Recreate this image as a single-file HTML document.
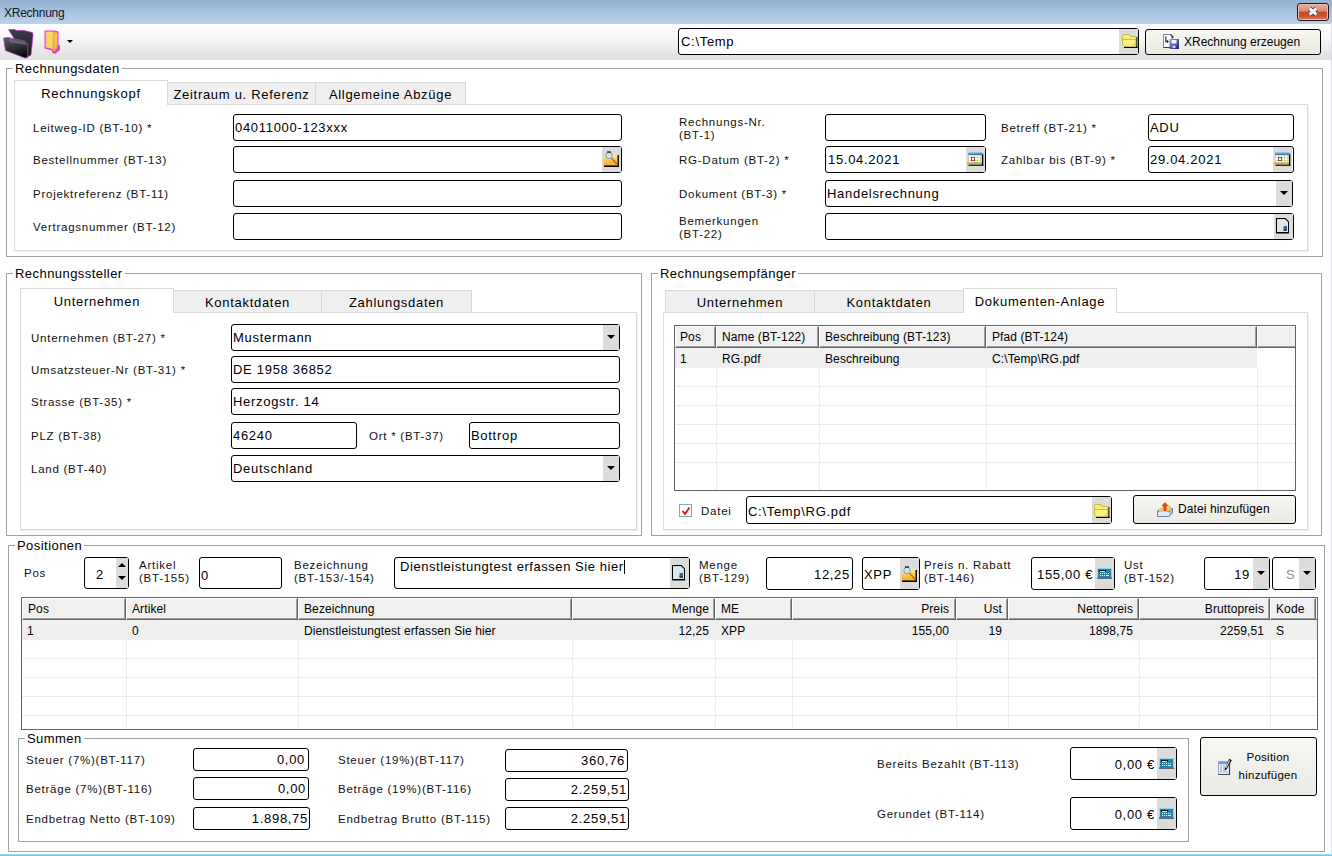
<!DOCTYPE html>
<html><head><meta charset="utf-8">
<style>
*{box-sizing:border-box}
html,body{margin:0;padding:0}
body{width:1332px;height:856px;position:relative;overflow:hidden;background:#fff;font-family:"Liberation Sans",sans-serif;color:#000;font-size:12px}
.a{position:absolute}
.tb{position:absolute;border:1px solid #000;border-radius:3px;background:#fff;height:27px}
.btn{position:absolute;background:#dcdcdc}
.grp{position:absolute;border:1px solid #a2a2a2}
.gt{position:absolute;background:#fff;font-size:13px;letter-spacing:0.45px;padding:0 2px;line-height:14px;white-space:nowrap}
.page{position:absolute;border:1px solid #dadada;box-shadow:1px 1px 0 #f0f0f0}
.tab{position:absolute;background:#efefef;border:1px solid #d9d9d9;border-bottom:none;font-size:13px;letter-spacing:0.7px;text-align:center;white-space:nowrap}
.tab.sel{background:#fff;z-index:2}
.l{position:absolute;font-size:11.5px;letter-spacing:0.75px;white-space:nowrap;line-height:13px;color:#111}
.t{position:absolute;font-size:13px;letter-spacing:0.7px;white-space:nowrap;line-height:15px}
.g{position:absolute;font-size:12px;line-height:14px;white-space:nowrap;letter-spacing:0.1px}
.arr{position:absolute;width:0;height:0;border-left:4px solid transparent;border-right:4px solid transparent;border-top:4px solid #000}
</style></head><body>
<!-- title bar -->
<div class="a" style="left:0;top:0;width:1332px;height:24px;background:linear-gradient(#94b1d3,#bad3ec)"></div>
<div class="a" style="left:4px;top:6px;font-size:12px;line-height:14px;color:#101828;letter-spacing:-0.25px">XRechnung</div>
<!-- toolbar -->
<div class="a" style="left:0;top:24px;width:1332px;height:36px;background:linear-gradient(#ffffff,#f6f6f6 40%,#dedede)"></div>

<!-- toolbar icons -->
<svg class="a" style="left:0px;top:26px" width="40" height="36" viewBox="0 0 40 36">
 <defs><linearGradient id="dkf" x1="0" y1="0" x2="0.3" y2="1"><stop offset="0" stop-color="#5c6268"/><stop offset="0.5" stop-color="#34383c"/><stop offset="1" stop-color="#0e0e10"/></linearGradient>
 <linearGradient id="dkb" x1="0" y1="0" x2="0" y2="1"><stop offset="0" stop-color="#3a3e44"/><stop offset="1" stop-color="#18191b"/></linearGradient></defs>
 <path d="M8.5 3.5 L15 3.5 L16 4.5 L24 4.5 L32.5 6.5 L33 9 L31 29 L26 31.5 Z" fill="url(#dkb)" stroke="#c030c8" stroke-width="1" stroke-opacity="0.7"/>
 <path d="M3.5 12 L8 11.5 L25 15 L28 18 L27.5 31.5 L25 32 L5.5 24.5 Z" fill="url(#dkf)" stroke="#c030c8" stroke-width="1" stroke-opacity="0.7"/>
 <path d="M9 12.5 L25 16 L27 19 L9 16 Z" fill="#6a7076" opacity="0.8"/>
</svg>
<svg class="a" style="left:40px;top:26px" width="24" height="30" viewBox="0 0 24 30">
 <path d="M4.5 4.5 L14.5 4.5 L18.5 5.5 L18.5 18 L20 20 L20 24 L15 28 L12 26.5 L12 24.5 L4.5 22.5 Z" fill="#e040c8"/>
 <path d="M5.5 5.5 L14 5.5 L14 23 L5.5 21.5 Z" fill="#f8a8b8"/>
 <path d="M6.5 6 L13.5 6 L14 23 L6.5 21 Z" fill="#fcd460"/>
 <path d="M13 6 L17.5 6.5 L17.5 21.5 L14.5 25.5 L12.5 24 Z" fill="#e2b040"/>
 <path d="M14 6.5 L17 7 L17 19 L14.5 22 Z" fill="#f0c858"/>
</svg>
<div class="arr" style="left:67px;top:40px;border-left-width:3px;border-right-width:3px;border-top-width:3px"></div>
<!-- path box -->
<div class="tb" style="left:678px;top:28px;width:461px;height:27px"></div>
<div class="t" style="left:681px;top:34px">C:\Temp</div>
<div class="btn" style="left:1119px;top:29px;width:19px;height:25px"></div>
<svg class="fold a" style="left:1121px;top:34px" width="17" height="14" viewBox="0 0 17 14">
 <rect x="15" y="3" width="1.4" height="11" fill="#000"/>
 <rect x="3" y="12.6" width="13.4" height="1.4" fill="#000"/>
 <path d="M1.5 2.5 Q1.5 0.5 3.5 0.5 L8 0.5 L9.5 2.5 L15 2.5 L15 12.5 L3 12.5 L1.5 10 Z" fill="#f6f07a" stroke="#c4bc3c" stroke-width="1"/>
 <path d="M1 5.5 L15 5.5" stroke="#c8c040" stroke-width="1"/>
 <path d="M6 12 L13 6.5 M9 12 L14 8 M4 10 L9 6.5" stroke="#f8f8c8" stroke-width="0.8"/>
 <path d="M11 11 L15 8 L15 12.5 L10 12.5 Z" fill="#f0c060" opacity="0.7"/>
</svg>
<!-- XRechnung erzeugen button -->
<div class="a" style="left:1145px;top:29px;width:176px;height:26px;border:1px solid #000;border-radius:3px;background:linear-gradient(#f7f7f3,#ebeae4)"></div>
<svg class="a" style="left:1162px;top:33px" width="18" height="17" viewBox="0 0 18 17">
 <defs><linearGradient id="flp" x1="0" y1="0" x2="1" y2="1"><stop offset="0" stop-color="#9a9cf0"/><stop offset="0.5" stop-color="#5658b0"/><stop offset="1" stop-color="#262870"/></linearGradient></defs>
 <path d="M1.5 1.5 L8.5 1.5 L10 3 L10 14.5 L1.5 14.5 Z" fill="#fff" stroke="#7c88a8" stroke-width="1"/>
 <path d="M1.5 14.5 L8 14.5" stroke="#303848" stroke-width="1"/>
 <path d="M3.8 3.5 L3.8 8.5 L6 8.5" stroke="#303848" stroke-width="1.3" fill="none"/>
 <path d="M5 7.2 L6.5 8.5 L5 9.8" stroke="#303848" stroke-width="1" fill="none"/>
 <path d="M8.5 1.5 L11 4 L10 5" stroke="#2a3040" stroke-width="1.2" fill="none"/>
 <rect x="7.5" y="6" width="9.5" height="10" fill="url(#flp)"/>
 <rect x="9.5" y="7" width="5" height="3.5" fill="#f4f4ff"/>
 <rect x="10.5" y="12.5" width="3" height="2.5" fill="#c8c8e8"/>
</svg>
<div class="t" style="left:1184px;top:34px;font-size:12px;letter-spacing:0px;line-height:16px">XRechnung erzeugen</div>
<!-- close button -->
<div class="a" style="left:1297px;top:3px;width:32px;height:18px;border:1px solid #2c1818;border-radius:3px;box-shadow:inset 0 0 0 1px #f0b8a8;background:linear-gradient(#eab0a0,#dc8a78 45%,#c04a2c 50%,#c85838 80%,#e08870)"></div>
<svg class="a" style="left:1306px;top:5px" width="14" height="13" viewBox="0 0 14 13">
 <path d="M3.5 3.5 L10.5 9.5 M10.5 3.5 L3.5 9.5" stroke="#4a2a2a" stroke-width="4.6" stroke-linecap="butt"/>
 <path d="M3.5 3.5 L10.5 9.5 M10.5 3.5 L3.5 9.5" stroke="#f6f6f6" stroke-width="3" stroke-linecap="butt"/>
</svg>
<div class="a" style="left:1331px;top:24px;width:1px;height:832px;background:#d4e0ec"></div>

<!-- ===== Rechnungsdaten ===== -->
<div class="grp" style="left:6px;top:68px;width:1317px;height:189px"></div>
<div class="gt" style="left:13px;top:62px">Rechnungsdaten</div>
<div class="page" style="left:14px;top:104px;width:1294px;height:147px"></div>
<div class="tab sel" style="left:14px;top:80px;width:154px;height:25px;padding-top:5px">Rechnungskopf</div>
<div class="tab" style="left:167px;top:82px;width:149px;height:22px;padding-top:4px">Zeitraum u. Referenz</div>
<div class="tab" style="left:315px;top:82px;width:151px;height:22px;padding-top:4px">Allgemeine Abzüge</div>

<div class="l" style="left:33px;top:122px">Leitweg-ID (BT-10) *</div>
<div class="l" style="left:33px;top:154px">Bestellnummer (BT-13)</div>
<div class="l" style="left:33px;top:188px">Projektreferenz (BT-11)</div>
<div class="l" style="left:33px;top:221px">Vertragsnummer (BT-12)</div>
<div class="tb" style="left:233px;top:114px;width:389px"></div>
<div class="t" style="left:235px;top:120px">04011000-123xxx</div>
<div class="tb" style="left:233px;top:146px;width:389px"></div>
<div class="btn" style="left:602px;top:147px;width:19px;height:25px"></div>
<svg class="a" style="left:602px;top:150px" width="18" height="18" viewBox="0 0 18 18">
 <defs><linearGradient id="fmg602" x1="0" y1="0" x2="0" y2="1"><stop offset="0" stop-color="#fcec90"/><stop offset="1" stop-color="#f0a818"/></linearGradient></defs>
 <path d="M1.5 8 L5 4.5 L15.5 4.5 L15.5 16 L1.5 16 Z" fill="url(#fmg602)"/>
 <path d="M2 16.2 L16.2 16.2 L16.2 5" stroke="#000" stroke-width="1.4" fill="none"/>
 <path d="M10 8.5 L15 14.5" stroke="#c83010" stroke-width="1.8" stroke-dasharray="1.2 0.8"/>
 <circle cx="7" cy="5.5" r="3.2" fill="#c4eaf6" stroke="#6a7a80" stroke-width="0.7"/>
 <path d="M5 2 L9 2" stroke="#111" stroke-width="1.2"/>
</svg>
<div class="tb" style="left:233px;top:180px;width:389px"></div>
<div class="tb" style="left:233px;top:213px;width:389px"></div>

<div class="l" style="left:679px;top:116px;line-height:13px">Rechnungs-Nr.<br>(BT-1)</div>
<div class="l" style="left:679px;top:154px">RG-Datum (BT-2) *</div>
<div class="l" style="left:679px;top:188px">Dokument (BT-3) *</div>
<div class="l" style="left:679px;top:215px;line-height:13px">Bemerkungen<br>(BT-22)</div>
<div class="tb" style="left:825px;top:114px;width:161px"></div>
<div class="tb" style="left:825px;top:146px;width:161px"></div>
<div class="t" style="left:828px;top:152px">15.04.2021</div>
<div class="btn" style="left:966px;top:147px;width:19px;height:25px"></div>
<svg class="cal a" style="left:967px;top:151px" width="17" height="16" viewBox="0 0 17 16">
 <defs><linearGradient id="cb967" x1="0" y1="0" x2="0" y2="1"><stop offset="0" stop-color="#a8d8f0"/><stop offset="1" stop-color="#2a64a0"/></linearGradient></defs>
 <rect x="15" y="3" width="1.3" height="11.5" fill="#000"/>
 <rect x="1.5" y="13.5" width="14.8" height="1.3" fill="#000"/>
 <rect x="1" y="4" width="14" height="8" fill="#d8d898"/>
 <g fill="#fff"><rect x="2" y="4.5" width="2" height="1.6"/><rect x="5" y="4.5" width="2" height="1.6"/><rect x="8" y="4.5" width="2" height="1.6"/><rect x="11" y="4.5" width="2" height="1.6"/><rect x="2" y="7" width="2" height="2"/><rect x="8" y="7" width="2" height="2"/><rect x="11" y="7" width="2" height="2"/><rect x="2" y="10" width="2" height="1.4"/><rect x="5" y="10" width="2" height="1.4"/><rect x="8" y="10" width="2" height="1.4"/><rect x="11" y="10" width="2" height="1.4"/></g>
 <rect x="4.5" y="6.5" width="3" height="3" fill="#fff" stroke="#a03c78" stroke-width="1"/>
 <rect x="1" y="1" width="15" height="3" rx="1" fill="url(#cb967)"/>
 <rect x="0" y="11.5" width="15" height="2" fill="#b4b440"/>
</svg>
<div class="tb" style="left:825px;top:180px;width:468px"></div>
<div class="t" style="left:827px;top:186px">Handelsrechnung</div>
<div class="btn" style="left:1276px;top:181px;width:16px;height:25px"></div>
<div class="arr" style="left:1280px;top:191px"></div>
<div class="tb" style="left:825px;top:213px;width:469px"></div>
<div class="btn" style="left:1274px;top:214px;width:19px;height:25px"></div>
<svg class="a" style="left:1275px;top:217px" width="15" height="17" viewBox="0 0 15 17">
 <path d="M1 1 L10.5 1 L14 4.5 L14 16.5 L1 16.5 Z" fill="#000"/>
 <path d="M2 2 L10 2 L13 5 L13 14.5 Q13 15 12.5 15 L2.5 15 Q2 15 2 14.5 Z" fill="#dfe4e8"/>
 <rect x="2" y="2" width="8" height="1" fill="#b8e8e0"/>
 <rect x="8.5" y="9" width="3.5" height="4.5" fill="#2a6c98"/>
 <rect x="8.5" y="12.5" width="3.5" height="1.2" fill="#0a2a30"/>
</svg>

<div class="l" style="left:1001px;top:122px">Betreff (BT-21) *</div>
<div class="l" style="left:1001px;top:154px">Zahlbar bis (BT-9) *</div>
<div class="tb" style="left:1148px;top:114px;width:146px"></div>
<div class="t" style="left:1150px;top:120px">ADU</div>
<div class="tb" style="left:1148px;top:146px;width:146px"></div>
<div class="t" style="left:1150px;top:152px">29.04.2021</div>
<div class="btn" style="left:1273px;top:147px;width:19px;height:25px"></div>
<svg class="cal a" style="left:1274px;top:151px" width="17" height="16" viewBox="0 0 17 16">
 <defs><linearGradient id="cb1274" x1="0" y1="0" x2="0" y2="1"><stop offset="0" stop-color="#a8d8f0"/><stop offset="1" stop-color="#2a64a0"/></linearGradient></defs>
 <rect x="15" y="3" width="1.3" height="11.5" fill="#000"/>
 <rect x="1.5" y="13.5" width="14.8" height="1.3" fill="#000"/>
 <rect x="1" y="4" width="14" height="8" fill="#d8d898"/>
 <g fill="#fff"><rect x="2" y="4.5" width="2" height="1.6"/><rect x="5" y="4.5" width="2" height="1.6"/><rect x="8" y="4.5" width="2" height="1.6"/><rect x="11" y="4.5" width="2" height="1.6"/><rect x="2" y="7" width="2" height="2"/><rect x="8" y="7" width="2" height="2"/><rect x="11" y="7" width="2" height="2"/><rect x="2" y="10" width="2" height="1.4"/><rect x="5" y="10" width="2" height="1.4"/><rect x="8" y="10" width="2" height="1.4"/><rect x="11" y="10" width="2" height="1.4"/></g>
 <rect x="4.5" y="6.5" width="3" height="3" fill="#fff" stroke="#a03c78" stroke-width="1"/>
 <rect x="1" y="1" width="15" height="3" rx="1" fill="url(#cb1274)"/>
 <rect x="0" y="11.5" width="15" height="2" fill="#b4b440"/>
</svg>


<!-- ===== Rechnungssteller ===== -->
<div class="grp" style="left:6px;top:273px;width:636px;height:263px"></div>
<div class="gt" style="left:13px;top:267px">Rechnungssteller</div>
<div class="page" style="left:20px;top:312px;width:617px;height:218px"></div>
<div class="tab sel" style="left:20px;top:288px;width:154px;height:25px;padding-top:5px">Unternehmen</div>
<div class="tab" style="left:173px;top:290px;width:149px;height:22px;padding-top:4px">Kontaktdaten</div>
<div class="tab" style="left:321px;top:290px;width:151px;height:22px;padding-top:4px">Zahlungsdaten</div>

<div class="l" style="left:31px;top:332px">Unternehmen (BT-27) *</div>
<div class="l" style="left:31px;top:364px">Umsatzsteuer-Nr (BT-31) *</div>
<div class="l" style="left:31px;top:396px">Strasse (BT-35) *</div>
<div class="l" style="left:31px;top:430px">PLZ (BT-38)</div>
<div class="l" style="left:31px;top:463px">Land (BT-40)</div>
<div class="tb" style="left:231px;top:324px;width:389px"></div>
<div class="t" style="left:233px;top:330px">Mustermann</div>
<div class="btn" style="left:603px;top:325px;width:16px;height:25px"></div>
<div class="arr" style="left:607px;top:335px"></div>
<div class="tb" style="left:231px;top:356px;width:389px"></div>
<div class="t" style="left:233px;top:362px">DE 1958 36852</div>
<div class="tb" style="left:231px;top:388px;width:389px"></div>
<div class="t" style="left:233px;top:394px">Herzogstr. 14</div>
<div class="tb" style="left:231px;top:422px;width:126px"></div>
<div class="t" style="left:233px;top:428px">46240</div>
<div class="l" style="left:369px;top:430px">Ort * (BT-37)</div>
<div class="tb" style="left:469px;top:422px;width:151px"></div>
<div class="t" style="left:471px;top:428px">Bottrop</div>
<div class="tb" style="left:231px;top:455px;width:389px"></div>
<div class="t" style="left:233px;top:461px">Deutschland</div>
<div class="btn" style="left:603px;top:456px;width:16px;height:25px"></div>
<div class="arr" style="left:607px;top:466px"></div>

<!-- ===== Rechnungsempfaenger ===== -->
<div class="grp" style="left:651px;top:273px;width:671px;height:263px"></div>
<div class="gt" style="left:658px;top:267px">Rechnungsempfänger</div>
<div class="page" style="left:663px;top:312px;width:645px;height:218px"></div>
<div class="tab" style="left:665px;top:290px;width:150px;height:22px;padding-top:4px">Unternehmen</div>
<div class="tab" style="left:814px;top:290px;width:150px;height:22px;padding-top:4px">Kontaktdaten</div>
<div class="tab sel" style="left:963px;top:288px;width:154px;height:25px;padding-top:5px">Dokumenten-Anlage</div>
<div class="a" style="left:674px;top:325px;width:622px;height:166px;border:1px solid #646464;background:#fff"></div>
<div class="a" style="left:675px;top:348px;width:582px;height:20px;background:#efefef"></div>
<div class="a" style="left:675px;top:386px;width:620px;height:1px;background:#ebebeb"></div>
<div class="a" style="left:675px;top:405px;width:620px;height:1px;background:#ebebeb"></div>
<div class="a" style="left:675px;top:424px;width:620px;height:1px;background:#ebebeb"></div>
<div class="a" style="left:675px;top:443px;width:620px;height:1px;background:#ebebeb"></div>
<div class="a" style="left:675px;top:462px;width:620px;height:1px;background:#ebebeb"></div>
<div class="a" style="left:716px;top:368px;width:1px;height:122px;background:#ebebeb"></div>
<div class="a" style="left:819px;top:368px;width:1px;height:122px;background:#ebebeb"></div>
<div class="a" style="left:986px;top:368px;width:1px;height:122px;background:#ebebeb"></div>
<div class="a" style="left:1257px;top:368px;width:1px;height:122px;background:#ebebeb"></div>
<div class="a" style="left:675px;top:326px;width:41px;height:22px;background:#f0f0f0;border-left:1px solid #fff;border-top:1px solid #fff;border-right:1px solid #646464;border-bottom:1px solid #646464;box-shadow:inset -1px -1px 0 #a0a0a0"></div>
<div class="a" style="left:716px;top:326px;width:103px;height:22px;background:#f0f0f0;border-left:1px solid #fff;border-top:1px solid #fff;border-right:1px solid #646464;border-bottom:1px solid #646464;box-shadow:inset -1px -1px 0 #a0a0a0"></div>
<div class="a" style="left:819px;top:326px;width:167px;height:22px;background:#f0f0f0;border-left:1px solid #fff;border-top:1px solid #fff;border-right:1px solid #646464;border-bottom:1px solid #646464;box-shadow:inset -1px -1px 0 #a0a0a0"></div>
<div class="a" style="left:986px;top:326px;width:271px;height:22px;background:#f0f0f0;border-left:1px solid #fff;border-top:1px solid #fff;border-right:1px solid #646464;border-bottom:1px solid #646464;box-shadow:inset -1px -1px 0 #a0a0a0"></div>
<div class="a" style="left:1257px;top:326px;width:38px;height:22px;background:#f0f0f0;border-left:1px solid #fff;border-top:1px solid #fff;border-bottom:1px solid #646464;box-shadow:inset 0 -1px 0 #a0a0a0"></div>
<div class="g" style="left:680px;top:330px">Pos</div>
<div class="g" style="left:722px;top:330px">Name (BT-122)</div>
<div class="g" style="left:825px;top:330px">Beschreibung (BT-123)</div>
<div class="g" style="left:992px;top:330px">Pfad (BT-124)</div>
<div class="g" style="left:680px;top:352px">1</div>
<div class="g" style="left:722px;top:352px">RG.pdf</div>
<div class="g" style="left:825px;top:352px">Beschreibung</div>
<div class="g" style="left:992px;top:352px">C:\Temp\RG.pdf</div>
<div class="a" style="left:679px;top:504px;width:13px;height:13px;border:1px solid #8ea2b8;background:#fff"></div>
<svg class="a" style="left:681px;top:506px" width="10" height="10" viewBox="0 0 10 10"><path d="M1.5 5 L4 8 L8.5 1.5" stroke="#d01818" stroke-width="1.8" fill="none"/></svg>
<div class="l" style="left:701px;top:505px">Datei</div>
<div class="tb" style="left:746px;top:496px;width:366px;height:28px"></div>
<div class="t" style="left:748px;top:504px">C:\Temp\RG.pdf</div>
<div class="btn" style="left:1092px;top:497px;width:19px;height:26px"></div>
<svg class="fold a" style="left:1093px;top:504px" width="17" height="14" viewBox="0 0 17 14">
 <rect x="15" y="3" width="1.4" height="11" fill="#000"/>
 <rect x="3" y="12.6" width="13.4" height="1.4" fill="#000"/>
 <path d="M1.5 2.5 Q1.5 0.5 3.5 0.5 L8 0.5 L9.5 2.5 L15 2.5 L15 12.5 L3 12.5 L1.5 10 Z" fill="#f6f07a" stroke="#c4bc3c" stroke-width="1"/>
 <path d="M1 5.5 L15 5.5" stroke="#c8c040" stroke-width="1"/>
 <path d="M6 12 L13 6.5 M9 12 L14 8 M4 10 L9 6.5" stroke="#f8f8c8" stroke-width="0.8"/>
 <path d="M11 11 L15 8 L15 12.5 L10 12.5 Z" fill="#f0c060" opacity="0.7"/>
</svg>
<div class="a" style="left:1133px;top:495px;width:163px;height:29px;border:1px solid #000;border-radius:3px;background:linear-gradient(#f7f7f3,#ebeae4)"></div>
<svg class="a" style="left:1156px;top:501px" width="18" height="18" viewBox="0 0 18 18">
 <path d="M1 10 L5 7 L17 7 L17 12 L13 16 L1 16 Z" fill="#6888b0"/>
 <path d="M2 11 L13 11 L13 15 L2 15 Z" fill="#dde8f4"/>
 <path d="M13 11 L16 8 L16 12 L13 15 Z" fill="#a8bcd8"/>
 <path d="M3 8 L7 5 L15 5 L15 9 L11 11 L3 11 Z" fill="#f0c870"/>
 <path d="M9 1 L12.5 5 L10.5 5 L10.5 10 L7.5 10 L7.5 5 L5.5 5 Z" fill="#e84020"/>
</svg>
<div class="t" style="left:1178px;top:501px;font-size:12px;letter-spacing:0.1px;line-height:16px">Datei hinzufügen</div>

<!-- ===== Positionen ===== -->
<div class="grp" style="left:8px;top:545px;width:1317px;height:307px"></div>
<div class="gt" style="left:15px;top:539px">Positionen</div>
<div class="l" style="left:24px;top:567px">Pos</div>
<div class="tb" style="left:84px;top:557px;width:45px;height:32px"></div>
<div class="t" style="left:96px;top:567px">2</div>
<div class="btn" style="left:116px;top:558px;width:12px;height:30px"></div>
<div class="a" style="left:118px;top:563px;width:0;height:0;border-left:4px solid transparent;border-right:4px solid transparent;border-bottom:4px solid #000"></div>
<div class="arr" style="left:118px;top:576px"></div>
<div class="l" style="left:139px;top:559px;line-height:13px">Artikel<br>(BT-155)</div>
<div class="tb" style="left:199px;top:557px;width:83px;height:32px"></div>
<div class="t" style="left:201px;top:568px">0</div>
<div class="l" style="left:294px;top:559px;line-height:13px">Bezeichnung<br>(BT-153/-154)</div>
<div class="tb" style="left:394px;top:557px;width:296px;height:32px"></div>
<div class="t" style="left:400px;top:559px;letter-spacing:0.55px">Dienstleistungtest erfassen Sie hier</div>
<div class="a" style="left:624px;top:560px;width:1px;height:14px;background:#000"></div>
<div class="btn" style="left:670px;top:558px;width:19px;height:30px"></div>
<svg class="a" style="left:671px;top:564px" width="15" height="17" viewBox="0 0 15 17">
 <path d="M1 1 L10.5 1 L14 4.5 L14 16.5 L1 16.5 Z" fill="#000"/>
 <path d="M2 2 L10 2 L13 5 L13 14.5 Q13 15 12.5 15 L2.5 15 Q2 15 2 14.5 Z" fill="#dfe4e8"/>
 <rect x="2" y="2" width="8" height="1" fill="#b8e8e0"/>
 <rect x="8.5" y="9" width="3.5" height="4.5" fill="#2a6c98"/>
 <rect x="8.5" y="12.5" width="3.5" height="1.2" fill="#0a2a30"/>
</svg>
<div class="l" style="left:699px;top:559px;line-height:13px">Menge<br>(BT-129)</div>
<div class="tb" style="left:766px;top:557px;width:87px;height:33px"></div>
<div class="t" style="left:780px;top:567px;width:70px;text-align:right">12,25</div>
<div class="tb" style="left:862px;top:557px;width:58px;height:33px"></div>
<div class="t" style="left:864px;top:567px">XPP</div>
<div class="btn" style="left:900px;top:558px;width:19px;height:31px"></div>
<svg class="a" style="left:900px;top:565px" width="18" height="18" viewBox="0 0 18 18">
 <defs><linearGradient id="fmg900" x1="0" y1="0" x2="0" y2="1"><stop offset="0" stop-color="#fcec90"/><stop offset="1" stop-color="#f0a818"/></linearGradient></defs>
 <path d="M1.5 8 L5 4.5 L15.5 4.5 L15.5 16 L1.5 16 Z" fill="url(#fmg900)"/>
 <path d="M2 16.2 L16.2 16.2 L16.2 5" stroke="#000" stroke-width="1.4" fill="none"/>
 <path d="M10 8.5 L15 14.5" stroke="#c83010" stroke-width="1.8" stroke-dasharray="1.2 0.8"/>
 <circle cx="7" cy="5.5" r="3.2" fill="#c4eaf6" stroke="#6a7a80" stroke-width="0.7"/>
 <path d="M5 2 L9 2" stroke="#111" stroke-width="1.2"/>
</svg>
<div class="l" style="left:924px;top:559px;line-height:13px">Preis n. Rabatt<br>(BT-146)</div>
<div class="tb" style="left:1031px;top:557px;width:84px;height:33px"></div>
<div class="t" style="left:1037px;top:567px">155,00 €</div>
<div class="btn" style="left:1095px;top:558px;width:19px;height:31px"></div>
<svg class="a" style="left:1097px;top:568px" width="15" height="11" viewBox="0 0 15 11">
 <rect x="0.5" y="0.5" width="14" height="10" rx="1" fill="#2f7ea6" stroke="#8fd8f0" stroke-width="1"/>
 <rect x="0" y="9.5" width="15" height="1.5" fill="#50707f"/>
 <rect x="2" y="2" width="7" height="2" fill="#101010"/>
 <rect x="3" y="3" width="5" height="1" fill="#f0f0b0"/>
 <g fill="#e8f4ff"><rect x="3" y="5" width="1" height="1"/><rect x="5" y="5" width="1" height="1"/><rect x="7" y="5" width="1" height="1"/><rect x="9" y="5" width="1" height="1"/><rect x="11" y="5" width="1" height="1"/><rect x="3" y="7" width="1" height="1"/><rect x="5" y="7" width="1" height="1"/><rect x="7" y="7" width="1" height="1"/><rect x="9" y="7" width="3" height="1"/></g>
</svg>
<div class="l" style="left:1124px;top:559px;line-height:13px">Ust<br>(BT-152)</div>
<div class="tb" style="left:1204px;top:557px;width:66px;height:33px"></div>
<div class="t" style="left:1220px;top:567px;width:30px;text-align:right">19</div>
<div class="btn" style="left:1253px;top:558px;width:16px;height:31px"></div>
<div class="arr" style="left:1257px;top:571px"></div>
<div class="tb" style="left:1272px;top:557px;width:44px;height:33px"></div>
<div class="t" style="left:1286px;top:567px;color:#8c8c8c">S</div>
<div class="btn" style="left:1299px;top:558px;width:16px;height:31px"></div>
<div class="arr" style="left:1303px;top:571px"></div>
<div class="a" style="left:21px;top:597px;width:1297px;height:133px;border:1px solid #646464;background:#fff"></div>
<div class="a" style="left:22px;top:620px;width:1295px;height:20px;background:#efefef"></div>
<div class="a" style="left:22px;top:658px;width:1295px;height:1px;background:#ebebeb"></div>
<div class="a" style="left:22px;top:677px;width:1295px;height:1px;background:#ebebeb"></div>
<div class="a" style="left:22px;top:696px;width:1295px;height:1px;background:#ebebeb"></div>
<div class="a" style="left:22px;top:715px;width:1295px;height:1px;background:#ebebeb"></div>
<div class="a" style="left:126px;top:640px;width:1px;height:89px;background:#ebebeb"></div>
<div class="a" style="left:298px;top:640px;width:1px;height:89px;background:#ebebeb"></div>
<div class="a" style="left:572px;top:640px;width:1px;height:89px;background:#ebebeb"></div>
<div class="a" style="left:715px;top:640px;width:1px;height:89px;background:#ebebeb"></div>
<div class="a" style="left:792px;top:640px;width:1px;height:89px;background:#ebebeb"></div>
<div class="a" style="left:956px;top:640px;width:1px;height:89px;background:#ebebeb"></div>
<div class="a" style="left:1008px;top:640px;width:1px;height:89px;background:#ebebeb"></div>
<div class="a" style="left:1139px;top:640px;width:1px;height:89px;background:#ebebeb"></div>
<div class="a" style="left:1270px;top:640px;width:1px;height:89px;background:#ebebeb"></div>
<div class="a" style="left:22px;top:598px;width:104px;height:22px;background:#f0f0f0;border-left:1px solid #fff;border-top:1px solid #fff;border-right:1px solid #646464;border-bottom:1px solid #646464;box-shadow:inset -1px -1px 0 #a0a0a0"></div>
<div class="a" style="left:126px;top:598px;width:172px;height:22px;background:#f0f0f0;border-left:1px solid #fff;border-top:1px solid #fff;border-right:1px solid #646464;border-bottom:1px solid #646464;box-shadow:inset -1px -1px 0 #a0a0a0"></div>
<div class="a" style="left:298px;top:598px;width:274px;height:22px;background:#f0f0f0;border-left:1px solid #fff;border-top:1px solid #fff;border-right:1px solid #646464;border-bottom:1px solid #646464;box-shadow:inset -1px -1px 0 #a0a0a0"></div>
<div class="a" style="left:572px;top:598px;width:143px;height:22px;background:#f0f0f0;border-left:1px solid #fff;border-top:1px solid #fff;border-right:1px solid #646464;border-bottom:1px solid #646464;box-shadow:inset -1px -1px 0 #a0a0a0"></div>
<div class="a" style="left:715px;top:598px;width:77px;height:22px;background:#f0f0f0;border-left:1px solid #fff;border-top:1px solid #fff;border-right:1px solid #646464;border-bottom:1px solid #646464;box-shadow:inset -1px -1px 0 #a0a0a0"></div>
<div class="a" style="left:792px;top:598px;width:164px;height:22px;background:#f0f0f0;border-left:1px solid #fff;border-top:1px solid #fff;border-right:1px solid #646464;border-bottom:1px solid #646464;box-shadow:inset -1px -1px 0 #a0a0a0"></div>
<div class="a" style="left:956px;top:598px;width:52px;height:22px;background:#f0f0f0;border-left:1px solid #fff;border-top:1px solid #fff;border-right:1px solid #646464;border-bottom:1px solid #646464;box-shadow:inset -1px -1px 0 #a0a0a0"></div>
<div class="a" style="left:1008px;top:598px;width:131px;height:22px;background:#f0f0f0;border-left:1px solid #fff;border-top:1px solid #fff;border-right:1px solid #646464;border-bottom:1px solid #646464;box-shadow:inset -1px -1px 0 #a0a0a0"></div>
<div class="a" style="left:1139px;top:598px;width:131px;height:22px;background:#f0f0f0;border-left:1px solid #fff;border-top:1px solid #fff;border-right:1px solid #646464;border-bottom:1px solid #646464;box-shadow:inset -1px -1px 0 #a0a0a0"></div>
<div class="a" style="left:1270px;top:598px;width:46px;height:22px;background:#f0f0f0;border-left:1px solid #fff;border-top:1px solid #fff;border-right:1px solid #646464;border-bottom:1px solid #646464;box-shadow:inset -1px -1px 0 #a0a0a0"></div>
<div class="a" style="left:1316px;top:598px;width:1px;height:22px;background:#fff;border-bottom:1px solid #646464"></div>
<div class="g" style="left:28px;top:602px">Pos</div>
<div class="g" style="left:132px;top:602px">Artikel</div>
<div class="g" style="left:304px;top:602px">Bezeichnung</div>
<div class="g" style="left:609px;top:602px;width:100px;text-align:right">Menge</div>
<div class="g" style="left:721px;top:602px">ME</div>
<div class="g" style="left:849px;top:602px;width:100px;text-align:right">Preis</div>
<div class="g" style="left:962px;top:602px;width:40px;text-align:right">Ust</div>
<div class="g" style="left:1033px;top:602px;width:100px;text-align:right">Nettopreis</div>
<div class="g" style="left:1164px;top:602px;width:100px;text-align:right">Bruttopreis</div>
<div class="g" style="left:1276px;top:602px">Kode</div>
<div class="g" style="left:27px;top:624px">1</div>
<div class="g" style="left:132px;top:624px">0</div>
<div class="g" style="left:304px;top:624px">Dienstleistungtest erfassen Sie hier</div>
<div class="g" style="left:609px;top:624px;width:100px;text-align:right">12,25</div>
<div class="g" style="left:721px;top:624px">XPP</div>
<div class="g" style="left:849px;top:624px;width:100px;text-align:right">155,00</div>
<div class="g" style="left:962px;top:624px;width:40px;text-align:right">19</div>
<div class="g" style="left:1033px;top:624px;width:100px;text-align:right">1898,75</div>
<div class="g" style="left:1164px;top:624px;width:100px;text-align:right">2259,51</div>
<div class="g" style="left:1276px;top:624px">S</div>

<!-- ===== Summen ===== -->
<div class="grp" style="left:18px;top:738px;width:1171px;height:104px"></div>
<div class="gt" style="left:25px;top:732px">Summen</div>
<div class="l" style="left:26px;top:754px">Steuer (7%)(BT-117)</div>
<div class="l" style="left:26px;top:783px">Beträge (7%)(BT-116)</div>
<div class="l" style="left:26px;top:813px">Endbetrag Netto (BT-109)</div>
<div class="tb" style="left:193px;top:748px;width:116px;height:23px"></div>
<div class="t" style="left:195px;top:752px;width:110px;text-align:right">0,00</div>
<div class="tb" style="left:193px;top:777px;width:116px;height:23px"></div>
<div class="t" style="left:195px;top:781px;width:111px;text-align:right">0,00</div>
<div class="tb" style="left:193px;top:807px;width:117px;height:23px"></div>
<div class="t" style="left:195px;top:811px;width:113px;text-align:right">1.898,75</div>
<div class="l" style="left:338px;top:754px">Steuer (19%)(BT-117)</div>
<div class="l" style="left:338px;top:783px">Beträge (19%)(BT-116)</div>
<div class="l" style="left:338px;top:813px">Endbetrag Brutto (BT-115)</div>
<div class="tb" style="left:505px;top:749px;width:123px;height:23px"></div>
<div class="t" style="left:507px;top:753px;width:118px;text-align:right">360,76</div>
<div class="tb" style="left:505px;top:778px;width:124px;height:23px"></div>
<div class="t" style="left:507px;top:782px;width:120px;text-align:right">2.259,51</div>
<div class="tb" style="left:505px;top:807px;width:124px;height:23px"></div>
<div class="t" style="left:507px;top:811px;width:120px;text-align:right">2.259,51</div>
<div class="l" style="left:877px;top:758px">Bereits Bezahlt (BT-113)</div>
<div class="l" style="left:877px;top:808px">Gerundet (BT-114)</div>
<div class="tb" style="left:1070px;top:747px;width:107px;height:33px"></div>
<div class="t" style="left:1080px;top:757px;width:75px;text-align:right">0,00 €</div>
<div class="btn" style="left:1157px;top:748px;width:19px;height:31px"></div>
<svg class="a" style="left:1159px;top:758px" width="15" height="11" viewBox="0 0 15 11">
 <rect x="0.5" y="0.5" width="14" height="10" rx="1" fill="#2f7ea6" stroke="#8fd8f0" stroke-width="1"/>
 <rect x="0" y="9.5" width="15" height="1.5" fill="#50707f"/>
 <rect x="2" y="2" width="7" height="2" fill="#101010"/>
 <rect x="3" y="3" width="5" height="1" fill="#f0f0b0"/>
 <g fill="#e8f4ff"><rect x="3" y="5" width="1" height="1"/><rect x="5" y="5" width="1" height="1"/><rect x="7" y="5" width="1" height="1"/><rect x="9" y="5" width="1" height="1"/><rect x="11" y="5" width="1" height="1"/><rect x="3" y="7" width="1" height="1"/><rect x="5" y="7" width="1" height="1"/><rect x="7" y="7" width="1" height="1"/><rect x="9" y="7" width="3" height="1"/></g>
</svg>
<div class="tb" style="left:1070px;top:797px;width:107px;height:33px"></div>
<div class="t" style="left:1080px;top:807px;width:75px;text-align:right">0,00 €</div>
<div class="btn" style="left:1157px;top:798px;width:19px;height:31px"></div>
<svg class="a" style="left:1159px;top:808px" width="15" height="11" viewBox="0 0 15 11">
 <rect x="0.5" y="0.5" width="14" height="10" rx="1" fill="#2f7ea6" stroke="#8fd8f0" stroke-width="1"/>
 <rect x="0" y="9.5" width="15" height="1.5" fill="#50707f"/>
 <rect x="2" y="2" width="7" height="2" fill="#101010"/>
 <rect x="3" y="3" width="5" height="1" fill="#f0f0b0"/>
 <g fill="#e8f4ff"><rect x="3" y="5" width="1" height="1"/><rect x="5" y="5" width="1" height="1"/><rect x="7" y="5" width="1" height="1"/><rect x="9" y="5" width="1" height="1"/><rect x="11" y="5" width="1" height="1"/><rect x="3" y="7" width="1" height="1"/><rect x="5" y="7" width="1" height="1"/><rect x="7" y="7" width="1" height="1"/><rect x="9" y="7" width="3" height="1"/></g>
</svg>
<div class="a" style="left:1200px;top:737px;width:117px;height:59px;border:1px solid #000;border-radius:3px;background:linear-gradient(#f7f7f3,#ebeae4)"></div>
<svg class="a" style="left:1217px;top:758px" width="16" height="18" viewBox="0 0 16 18">
 <rect x="1.5" y="3.5" width="11" height="13" fill="#eef4fc" stroke="#98a8c0" stroke-width="1"/>
 <path d="M12.5 4 L12.5 16.5 L1.5 16.5" stroke="#3c4450" stroke-width="1.2" fill="none"/>
 <rect x="2" y="4" width="10" height="2.2" fill="#6c94dc"/>
 <g fill="#8c9cb4"><rect x="3" y="7.5" width="2" height="1"/><rect x="6" y="7.5" width="2" height="1"/><rect x="3" y="9.5" width="2" height="1"/><rect x="6" y="9.5" width="2" height="1"/><rect x="3" y="11.5" width="2" height="1"/><rect x="6" y="11.5" width="2" height="1"/><rect x="3" y="13.5" width="2" height="1"/><rect x="6" y="13.5" width="2" height="1"/><rect x="9" y="13.5" width="2" height="1"/></g>
 <path d="M12.2 0.8 L14.8 2.2 L9.5 11.5 L7.8 12.8 L7.9 10.5 Z" fill="#111"/>
 <path d="M12.6 2.5 L9 9.8" stroke="#f0e098" stroke-width="1.1"/>
</svg>
<div class="t" style="left:1232px;top:749px;width:72px;text-align:center;line-height:17.5px;font-size:11.5px;letter-spacing:0.25px">Position<br>hinzufügen</div>
<div class="a" style="left:0;top:854px;width:1332px;height:2px;background:linear-gradient(#a8e8f8,#5cc0dc)"></div>

</body></html>
